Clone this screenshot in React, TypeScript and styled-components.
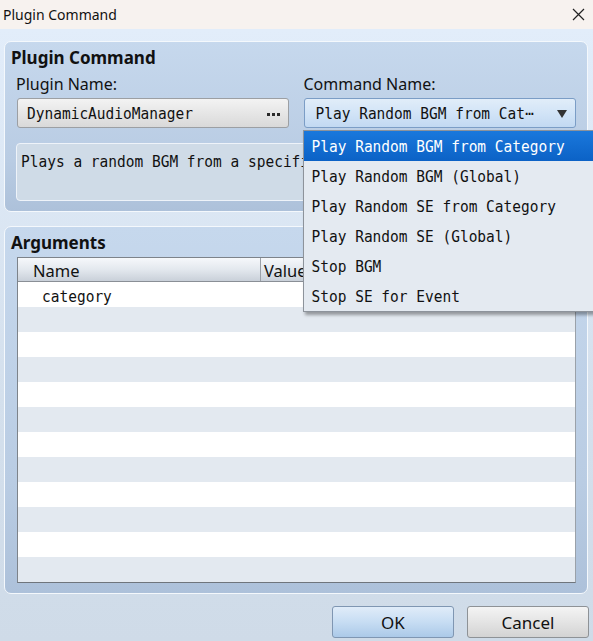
import React from 'react'
import styled, { createGlobalStyle } from 'styled-components'

const GlobalStyle = createGlobalStyle`
    html, body {
        margin: 0;
        padding: 0;
        background: #cfdbe8;
    }
    * {
        box-sizing: border-box;
    }
`

const uiFont = `"Noto Sans", "Open Sans", sans-serif`
const monoFont = `"DejaVu Sans Mono", "Liberation Mono", monospace`

const Window = styled.div`
    width: 593px;
    height: 641px;
    display: flex;
    flex-direction: column;
    overflow: hidden;
    font-family: ${uiFont};
    color: #111;
`
const TitleBar = styled.div`
    height: 29px;
    flex: none;
    display: flex;
    align-items: center;
    justify-content: space-between;
    padding: 0 8px 0 3px;
    background: #f7f2ef;
    font-size: 14px;
`
const Body = styled.div`
    flex: 1;
    display: flex;
    flex-direction: column;
    padding: 12px 4px 3px 4px;
    background: linear-gradient(to bottom, #e2edfa 0%, #d4e0ed 60%, #cfdbe8 100%);
`
const GroupBox = styled.section<{ $height: number; $gap?: number }>`
    height: ${(p) => p.$height}px;
    margin-top: ${(p) => p.$gap || 0}px;
    margin-right: 1px;
    flex: none;
    display: flex;
    flex-direction: column;
    padding: 5px 11px 10px 11px;
    border: 1px solid #f4f8fc;
    border-radius: 7px;
    background: linear-gradient(to bottom, #c6d8ed 0%, #b9cce3 70%, #adc1da 100%);
    position: relative;
`
const GroupTitle = styled.div`
    font-size: 17px;
    font-weight: 700;
    line-height: 21px;
    margin-left: -5px;
`
const FieldGrid = styled.div`
    display: grid;
    grid-template-columns: 1fr 1fr;
    column-gap: 15px;
    margin-top: 6px;
`
const FieldLabel = styled.div`
    font-size: 16px;
    line-height: 21px;
    margin-bottom: 3px;
`
const FieldColumn = styled.div`
    position: relative;
    display: flex;
    flex-direction: column;
`
// the editor's monospace face is taller than DejaVu at the same advance
const Glyphs = styled.span`
    display: inline-block;
    font-family: ${monoFont};
    font-size: 14.5px;
    white-space: pre;
    transform: scaleY(1.13);
    transform-origin: 50% 55%;
`
const PickerButton = styled.div`
    height: 30px;
    display: flex;
    align-items: center;
    justify-content: space-between;
    padding: 0 8px 0 9px;
    margin-left: 1px;
    border: 1px solid #9c9fa3;
    border-radius: 3px;
    background: linear-gradient(to bottom, #f3f3f3 0%, #e6e6e6 50%, #d9d9d9 100%);
`
const Dots = styled.span`
    display: flex;
    gap: 2px;
    margin-top: 2px;
`
const Dot = styled.i`
    width: 3px;
    height: 3px;
    background: #2a2a2a;
`
const Combo = styled.div`
    height: 30px;
    display: flex;
    align-items: center;
    justify-content: space-between;
    padding: 0 8px 0 11px;
    border: 1px solid #7b9dc6;
    border-radius: 3px;
    background: linear-gradient(to bottom, #e1edf9 0%, #d2e4f7 50%, #c2d9f2 100%);
`
const Arrow = styled.svg`
    flex: none;
    margin-top: 1px;
`
const Popup = styled.ul`
    position: absolute;
    top: 100%;
    left: -1px;
    width: 300px;
    margin: 2px 0 0 0;
    padding: 0;
    list-style: none;
    background: #e4eaf1;
    border: 1px solid #8d939b;
    border-right: none;
    box-shadow: 2px 3px 3px rgba(0, 0, 0, 0.35);
    z-index: 5;
`
const PopupItem = styled.li<{ $active?: boolean }>`
    height: 30px;
    display: flex;
    align-items: center;
    padding-left: 8px;
    white-space: nowrap;
    color: ${(p) => (p.$active ? '#fff' : '#111')};
    background: ${(p) => (p.$active ? 'linear-gradient(to bottom, #1a78dc 0%, #0b62c6 100%)' : 'transparent')};
`
const Description = styled.div`
    margin-top: 15px;
    height: 59px;
    padding: 6px 4px;
    border: 1px solid #eef3f9;
    border-radius: 4px;
    background: #cfdbe7;
    line-height: 20px;
    white-space: nowrap;
    overflow: hidden;
`
const Table = styled.div`
    margin-top: 4px;
    margin-left: 1px;
    border: 1px solid #7d838a;
    border-right-color: #9aa1a9;
    border-bottom-color: #6f757c;
    background: #fff;
    display: flex;
    flex-direction: column;
`
const HeaderRow = styled.div`
    height: 24px;
    flex: none;
    display: grid;
    grid-template-columns: 242px 1fr;
    border-bottom: 1px solid #8a8f96;
    background: linear-gradient(to bottom, #f6f8fb 0%, #e3e8ee 50%, #c9d0d9 100%);
`
const HeaderCell = styled.div<{ $divider?: boolean }>`
    display: flex;
    align-items: center;
    padding-top: 1px;
    padding-left: ${(p) => (p.$divider ? 3 : 15)}px;
    font-size: 16.5px;
    border-left: ${(p) => (p.$divider ? '1px solid #9aa0a8' : 'none')};
    overflow: hidden;
    white-space: nowrap;
`
const Row = styled.div<{ $alt: boolean }>`
    height: 25px;
    flex: none;
    display: flex;
    align-items: center;
    padding: 3px 0 0 24px;
    background: ${(p) => (p.$alt ? '#e3e9f0' : '#ffffff')};
`
const Footer = styled.div`
    margin-top: 12px;
    display: flex;
    justify-content: flex-end;
    gap: 13px;
`
const DialogButton = styled.button<{ $primary?: boolean }>`
    width: 122px;
    height: 32px;
    font-family: ${uiFont};
    font-size: 17px;
    color: #111;
    border: 1px solid ${(p) => (p.$primary ? '#7f96b2' : '#8e9296')};
    border-radius: 3px;
    background: ${(p) =>
        p.$primary
            ? 'linear-gradient(to bottom, #e0ecf9 0%, #c7ddf3 50%, #abc9e8 100%)'
            : 'linear-gradient(to bottom, #f4f4f4 0%, #e4e4e4 50%, #d3d3d3 100%)'};
    padding: 0;
`

const commands = [
    'Play Random BGM from Category',
    'Play Random BGM (Global)',
    'Play Random SE from Category',
    'Play Random SE (Global)',
    'Stop BGM',
    'Stop SE for Event',
]

function App() {
    const rows = Array.from({ length: 12 }, (_, i) => i)
    return (
        <Window>
            <GlobalStyle />
            <TitleBar>
                <span>Plugin Command</span>
                <svg width="13" height="13" viewBox="0 0 13 13">
                    <path d="M1 1 L12 12 M12 1 L1 12" stroke="#222" strokeWidth="1.2" fill="none" />
                </svg>
            </TitleBar>
            <Body>
                <GroupBox $height={171}>
                    <GroupTitle>Plugin Command</GroupTitle>
                    <FieldGrid>
                        <FieldColumn>
                            <FieldLabel>Plugin Name:</FieldLabel>
                            <PickerButton>
                                <Glyphs>DynamicAudioManager</Glyphs>
                                <Dots>
                                    <Dot />
                                    <Dot />
                                    <Dot />
                                </Dots>
                            </PickerButton>
                        </FieldColumn>
                        <FieldColumn>
                            <FieldLabel>Command Name:</FieldLabel>
                            <FieldColumn>
                                <Combo>
                                    <Glyphs>Play Random BGM from Cat⋯</Glyphs>
                                    <Arrow width="10" height="8" viewBox="0 0 10 8">
                                        <path d="M0 0 H10 L5 8 Z" fill="#333" />
                                    </Arrow>
                                </Combo>
                                <Popup>
                                    {commands.map((c, i) => (
                                        <PopupItem key={c} $active={i === 0}>
                                            <Glyphs>{c}</Glyphs>
                                        </PopupItem>
                                    ))}
                                </Popup>
                            </FieldColumn>
                        </FieldColumn>
                    </FieldGrid>
                    <Description>
                        <Glyphs>Plays a random BGM from a specified category.</Glyphs>
                    </Description>
                </GroupBox>
                <GroupBox $height={368} $gap={14}>
                    <GroupTitle>Arguments</GroupTitle>
                    <Table>
                        <HeaderRow>
                            <HeaderCell>Name</HeaderCell>
                            <HeaderCell $divider>Value</HeaderCell>
                        </HeaderRow>
                        {rows.map((i) => (
                            <Row key={i} $alt={i % 2 === 1}>
                                {i === 0 && <Glyphs>category</Glyphs>}
                            </Row>
                        ))}
                    </Table>
                </GroupBox>
                <Footer>
                    <DialogButton $primary>OK</DialogButton>
                    <DialogButton>Cancel</DialogButton>
                </Footer>
            </Body>
        </Window>
    )
}

export default App
